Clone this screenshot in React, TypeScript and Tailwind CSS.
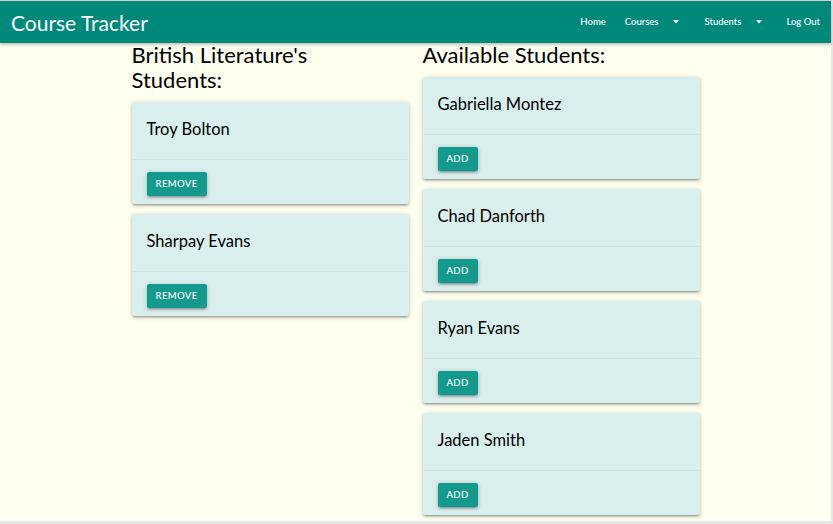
import React from "react";

const font = { fontFamily: 'Lato, "Noto Sans", sans-serif' };

function Card({ name, action }: { name: string; action: string }) {
  return (
    <div className="bg-[#d9efed] rounded-[2px] shadow-[0_2px_2px_0_rgba(0,0,0,0.14),0_3px_1px_-2px_rgba(0,0,0,0.12),0_1px_5px_0_rgba(0,0,0,0.2)]">
      <div className="h-[58px] pl-[15px] pr-4 pt-[17px] text-[16.5px] leading-[20px] text-black border-b border-[rgba(160,160,160,0.15)]">
        {name}
      </div>
      <div className="h-[44px] px-[15px] pt-[9px]">
        <button className="h-[24px] px-[9px] bg-[#139a8d] text-white text-[9.5px] font-medium tracking-[0.4px] uppercase rounded-[2px] shadow-[0_2px_2px_0_rgba(0,0,0,0.14),0_3px_1px_-2px_rgba(0,0,0,0.12),0_1px_5px_0_rgba(0,0,0,0.2)]">
          {action}
        </button>
      </div>
    </div>
  );
}

function Caret() {
  return (
    <svg width="8" height="4" viewBox="0 0 8 4" className="ml-[14px]">
      <path d="M1 0 L7 0 L4 3.5 Z" fill="white" />
    </svg>
  );
}

export default function App() {
  return (
    <div className="w-[833px] h-[524px] bg-[#e6e6e6] overflow-hidden" style={font}>
      <div className="w-[831px] h-[521px] bg-[#fffff0] border-t border-[#d8d8d8] flex flex-col">
        <nav className="h-[42px] bg-[#00897b] flex items-center justify-between pl-[11px] pr-[11px] shadow-[0_2px_2px_0_rgba(0,0,0,0.14),0_1px_5px_0_rgba(0,0,0,0.12)] shrink-0">
          <div className="text-white text-[21px] leading-none">Course Tracker</div>
          <div className="flex items-center text-white text-[9.5px] font-medium">
            <span>Home</span>
            <span className="ml-[19px] flex items-center">Courses<Caret /></span>
            <span className="ml-[24px] flex items-center">Students<Caret /></span>
            <span className="ml-[23px]">Log Out</span>
          </div>
        </nav>
        <div className="w-[568px] mx-auto grid grid-cols-2 gap-x-[14px]">
          <div>
            <h2 className="text-[22px] leading-[25px] text-black mb-[10px] -mt-[1px]">
              British Literature's
              <br />
              Students:
            </h2>
            <div className="flex flex-col gap-[10px]">
              <Card name="Troy Bolton" action="Remove" />
              <Card name="Sharpay Evans" action="Remove" />
            </div>
          </div>
          <div>
            <h2 className="text-[22px] leading-[25px] text-black mb-[10px] -mt-[1px]">
              Available Students:
            </h2>
            <div className="flex flex-col gap-[10px]">
              <Card name="Gabriella Montez" action="Add" />
              <Card name="Chad Danforth" action="Add" />
              <Card name="Ryan Evans" action="Add" />
              <Card name="Jaden Smith" action="Add" />
            </div>
          </div>
        </div>
      </div>
    </div>
  );
}
